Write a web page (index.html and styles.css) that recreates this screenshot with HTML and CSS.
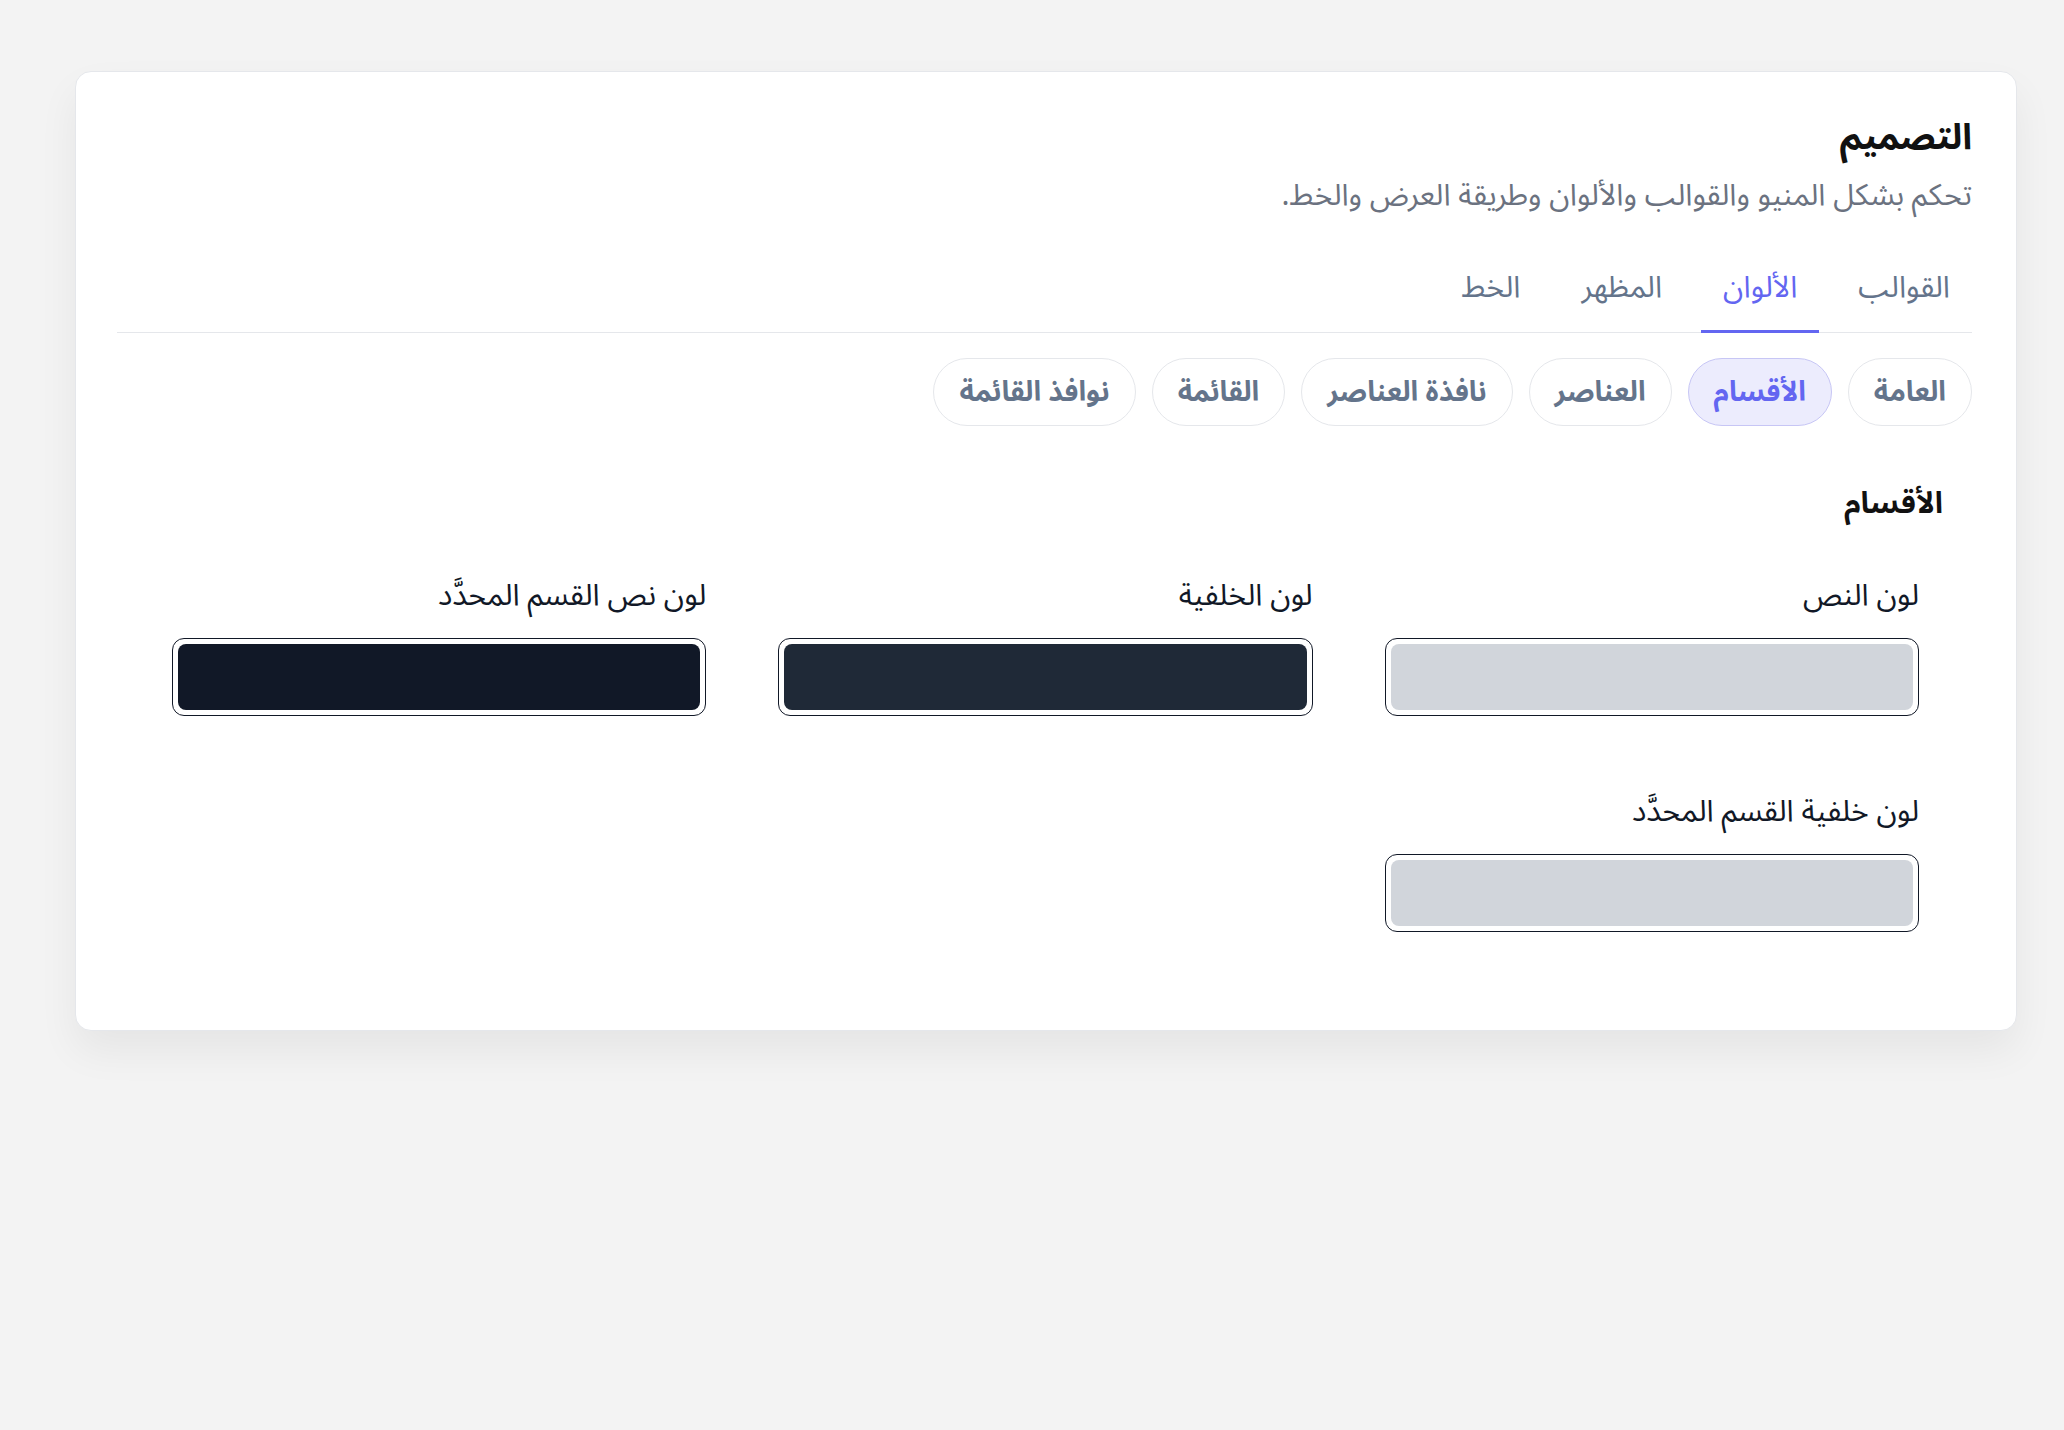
FILE: index.html
```html
<!DOCTYPE html>
<html lang="ar" dir="rtl">

<head>
    <meta charset="UTF-8">
    <meta name="viewport" content="width=device-width, initial-scale=1.0">
    <title>التصميم</title>
    <link rel="stylesheet" href="styles.css">
</head>

<body>
    <section class="card">
        <h1 class="title">التصميم</h1>
        <p class="subtitle">تحكم بشكل المنيو والقوالب والألوان وطريقة العرض والخط.</p>

        <nav class="tabs">
            <button class="tab">القوالب</button>
            <button class="tab active">الألوان</button>
            <button class="tab">المظهر</button>
            <button class="tab">الخط</button>
        </nav>

        <div class="pills">
            <button class="pill">العامة</button>
            <button class="pill active">الأقسام</button>
            <button class="pill">العناصر</button>
            <button class="pill">نافذة العناصر</button>
            <button class="pill">القائمة</button>
            <button class="pill">نوافذ القائمة</button>
        </div>

        <div class="group">
            <h2 class="group-title">الأقسام</h2>
            <div class="fields">
                <label class="field">
                    <span class="field-label">لون النص</span>
                    <span class="swatch"><span class="swatch-color light"></span></span>
                </label>
                <label class="field">
                    <span class="field-label">لون الخلفية</span>
                    <span class="swatch"><span class="swatch-color slate"></span></span>
                </label>
                <label class="field">
                    <span class="field-label">لون نص القسم المحدَّد</span>
                    <span class="swatch"><span class="swatch-color dark"></span></span>
                </label>
                <label class="field">
                    <span class="field-label">لون خلفية القسم المحدَّد</span>
                    <span class="swatch"><span class="swatch-color light"></span></span>
                </label>
            </div>
        </div>
    </section>
</body>

</html>
```

FILE: styles.css
```css
body {
    margin: 0;
    padding: 71px 47px 0 75px;
    min-height: 100vh;
    box-sizing: border-box;
    background-color: #f3f3f3;
    font-family: "Noto Sans Arabic", "DejaVu Sans", "Noto Sans", sans-serif;
    color: #111827;
}

.card {
    background-color: white;
    border: 1px solid #e5e7eb;
    border-radius: 16px;
    box-shadow: 0 20px 40px rgba(0, 0, 0, 0.06);
    padding: 41px 44px 98px 41px;
}

.title {
    margin: 0;
    font-size: 36px;
    line-height: 51px;
    font-weight: 700;
    color: #111;
}

.subtitle {
    margin: 10px 0 0;
    font-size: 30px;
    line-height: 44px;
    color: #6b7280;
}

.tabs {
    display: flex;
    gap: 17px;
    margin-top: 36px;
    border-bottom: 1px solid #e5e7eb;
}

.tab {
    background: none;
    border: none;
    border-bottom: 3px solid transparent;
    margin-bottom: -1px;
    padding: 16px 22px 24px;
    font-family: inherit;
    font-size: 30px;
    line-height: 36px;
    color: #64748b;
}

.tab.active {
    color: #6366f1;
    border-bottom-color: #6366f1;
}

.pills {
    display: flex;
    gap: 16px;
    margin-top: 25px;
}

.pill {
    height: 68px;
    padding: 0 25px;
    background-color: white;
    border: 1px solid #e5e7eb;
    border-radius: 999px;
    font-family: inherit;
    font-size: 28px;
    font-weight: 700;
    color: #64748b;
}

.pill.active {
    background-color: #ececfd;
    border-color: #c7c6f5;
    color: #6366f1;
}

.group {
    margin-top: 60px;
}

.group-title {
    margin: 0 29px 0 0;
    font-size: 30px;
    line-height: 36px;
    font-weight: 700;
    color: #111;
}

.fields {
    display: grid;
    grid-template-columns: repeat(3, 1fr);
    column-gap: 72px;
    row-gap: 78px;
    margin-top: 56px;
    padding: 0 53px 0 55px;
}

.field {
    display: flex;
    flex-direction: column;
    gap: 24px;
}

.field-label {
    font-size: 30px;
    line-height: 36px;
    color: #111827;
}

.swatch {
    display: block;
    height: 78px;
    box-sizing: border-box;
    border: 1px solid #111827;
    border-radius: 12px;
    padding: 5px;
}

.swatch-color {
    display: block;
    height: 100%;
    border-radius: 8px;
}

.light {
    background-color: #d1d5db;
}

.slate {
    background-color: #1f2937;
}

.dark {
    background-color: #111827;
}
```
